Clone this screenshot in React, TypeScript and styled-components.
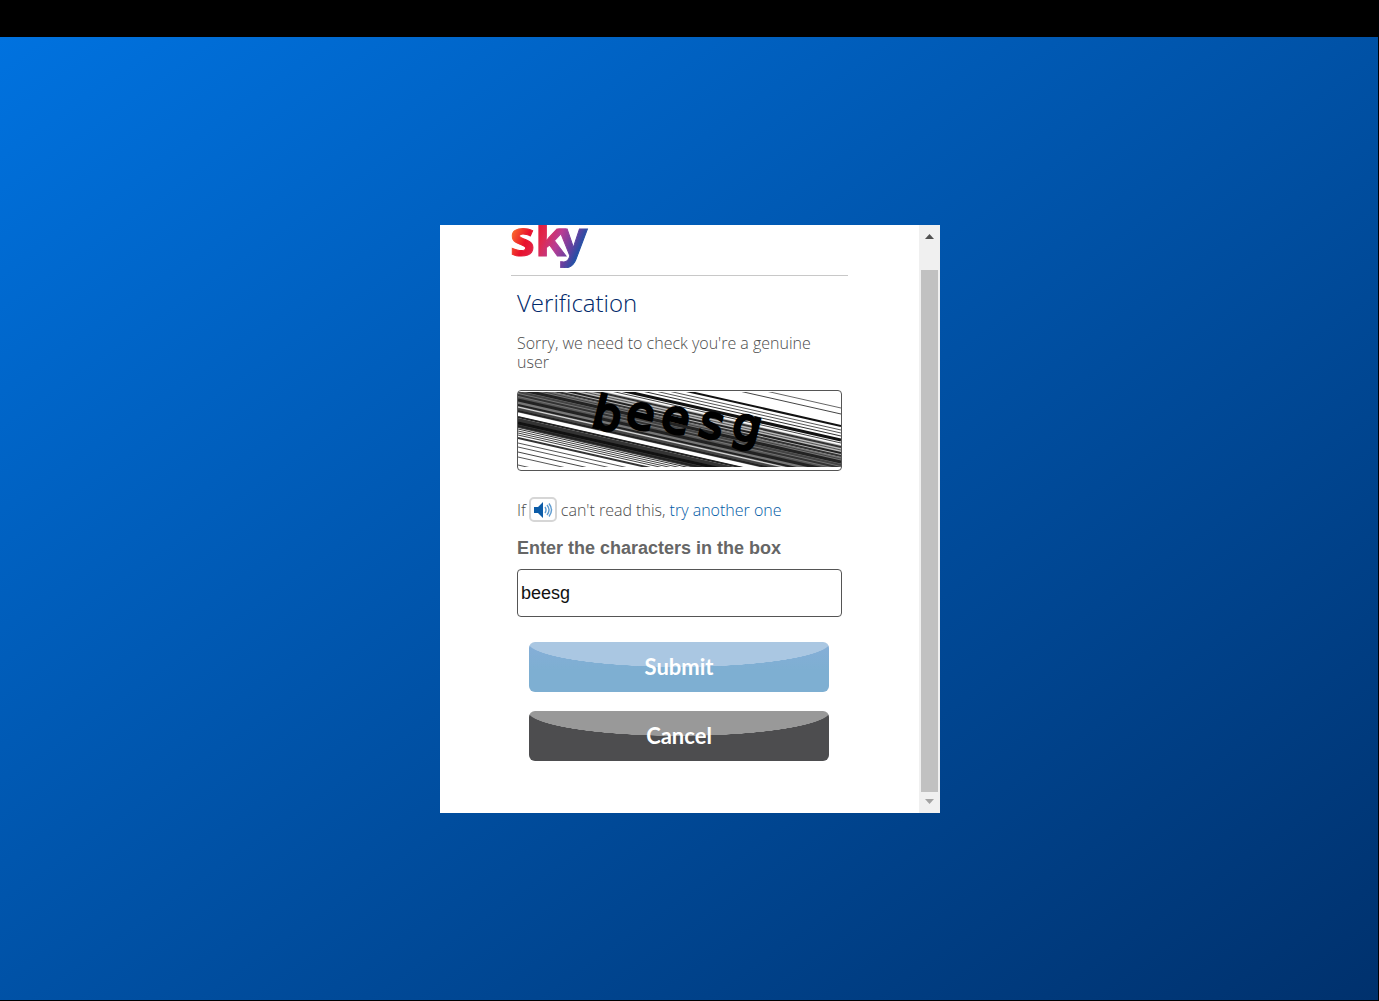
import React, { useState } from "react";
import styled, { createGlobalStyle } from "styled-components";

const GlobalStyle = createGlobalStyle`
  *, *::before, *::after { box-sizing: border-box; }
  body { margin: 0; background: #000; font-family: "Open Sans", "Noto Sans", sans-serif; }
`;

const Page = styled.div`
  display: flex;
  flex-direction: column;
  min-height: 100vh;
`;

const TopBar = styled.header`
  height: 37px;
  background: #000;
`;

const Stage = styled.main`
  flex: 1;
  display: flex;
  align-items: center;
  justify-content: center;
  padding: 1px 0 0 2px;
  border: solid #000;
  border-width: 0 1px 1px 0;
  background: linear-gradient(145deg, #0072df 0%, #00316d 100%);
`;

const Dialog = styled.section`
  display: flex;
  width: 500px;
  max-width: 100%;
  height: 588px;
  background: #fff;
`;

const Content = styled.div`
  flex: 1;
  padding: 0 71px;
  overflow: hidden;
`;

const LogoBar = styled.div`
  height: 51px;
  border-bottom: 1px solid #c8c8c8;
`;

const Form = styled.form`
  display: flex;
  flex-direction: column;
  padding: 10px 6px 0;
  font-size: 16px;
  color: #4c4c4c;
`;

const Title = styled.h1`
  margin: 0;
  font-size: 24px;
  line-height: 34px;
  font-weight: 300;
  color: #00286a;
`;

const Note = styled.p`
  margin: 14px 0 18px;
  line-height: 19px;
  font-size: 16px;
  font-weight: 300;
`;

const CaptchaFrame = styled.div`
  height: 81px;
  padding-top: 1px;
  overflow: hidden;
  border: 1px solid #555;
  border-radius: 4px;

  svg { display: block; }
`;

const Retry = styled.div`
  display: flex;
  align-items: center;
  margin-top: 26px;
  height: 25px;
  line-height: 24px;
  font-weight: 300;
  white-space: pre;

  a { color: #005ba6; text-decoration: none; }
`;

const AudioButton = styled.button`
  display: grid;
  place-items: center;
  width: 28px;
  height: 25px;
  margin: 0 4px 0 3px;
  padding: 0;
  border: 2px solid #d6d6d6;
  border-radius: 5px;
  background: #fff;
`;

const Label = styled.label`
  margin: 14px 0 9px;
  color: #666;
  font: bold 18px/24px "Liberation Sans", Arial, sans-serif;
`;

const TextBox = styled.input`
  width: 100%;
  height: 48px;
  padding: 0 3px;
  border: 1px solid #555;
  border-radius: 4px;
  background: #fff;
  color: #111;
  font: 18px "Liberation Sans", Arial, sans-serif;
`;

const Actions = styled.div`
  display: flex;
  flex-direction: column;
  gap: 19px;
  padding: 25px 13px 0 12px;
`;

const GlossButton = styled.button<{ $base: string; $gloss: string }>`
  height: 50px;
  padding: 0 0 2px;
  border: 0;
  border-radius: 6px;
  background:
    radial-gradient(ellipse 152px 25px at 50% 0, ${(p) => p.$gloss} 99%, transparent 100%),
    ${(p) => p.$base};
  color: #fff;
  font: bold 22px Lato, "Open Sans", sans-serif;
`;

const ScrollTrack = styled.div`
  display: flex;
  flex-direction: column;
  width: 21px;
  padding: 0 2px;
  background: #f0f0f0;
`;

const ScrollArrow = styled.div<{ $down?: boolean }>`
  display: flex;
  justify-content: center;
  height: ${(p) => (p.$down ? 21 : 45)}px;
  padding-top: ${(p) => (p.$down ? 7 : 9)}px;
`;

const ScrollThumb = styled.div`
  flex: 1;
  background: #c1c1c1;
`;

/* Each streak: height at the left edge, thickness, shade. */
const streaks: [number, number, string][] = [
  [-57, 1, "#666"], [-51, 1, "#444"], [-39, 2, "#111"], [-35, 1, "#555"],
  [-32, 1, "#555"], [-29, 1, "#333"], [-25, 3, "#111"], [-22, 1, "#444"],
  [-18, 2, "#333"], [-15, 1, "#555"], [-12, 2, "#222"], [-9, 2, "#333"],
  [-6, 1, "#444"], [-3, 3, "#222"], [0, 2, "#444"], [3, 2, "#333"],
  [6, 2, "#555"], [8, 3, "#222"], [13, 2, "#222"], [17, 2, "#444"],
  [19, 2, "#222"], [25, 2, "#222"], [28, 3, "#333"], [31, 3, "#111"],
  [34, 2, "#222"], [37, 1, "#333"], [39, 1, "#444"], [41, 1, "#444"],
  [43, 1, "#444"], [46, 2, "#333"], [51, 1, "#555"], [55, 1, "#555"],
  [60, 1, "#444"], [65, 1, "#555"], [73, 1, "#555"],
];

function CaptchaPicture() {
  return (
    <svg width="100%" height="75" viewBox="0 0 323 75" preserveAspectRatio="none" role="img" aria-label="Characters to type">
      <polygon points="0,-8 323,65 323,94 0,21" fill="#777" />
      <polygon points="0,-20 323,53 323,65 0,-8" fill="#bbb" />
      <polygon points="0,26 323,99 323,109 0,36" fill="#444" />
      {streaks.map(([y, w, c]) => (
        <line key={y} x1="0" y1={y} x2="323" y2={y + 73} stroke={c} strokeWidth={w} />
      ))}
      <line x1="0" y1="22" x2="323" y2="95" stroke="#fff" strokeWidth="3" />
      <line x1="0" y1="15" x2="323" y2="88" stroke="#ddd" strokeWidth="1" />
      <text
        x="72 106 141 179 212"
        y="34 33 37 43 45"
        rotate="14"
        fill="#000"
        stroke="#000"
        strokeWidth="3"
        fontFamily="DejaVu Sans"
        fontSize="45"
      >
        beesg
      </text>
    </svg>
  );
}

function SkyLogo() {
  return (
    <svg width="80" height="43" viewBox="0 0 80 43" role="img" aria-label="sky">
      <defs>
        <linearGradient id="sky" gradientUnits="userSpaceOnUse" x1="2" y1="4" x2="70" y2="34">
          <stop offset="0" stopColor="#fb6a2c" />
          <stop offset="0.22" stopColor="#e8102c" />
          <stop offset="0.42" stopColor="#e02a50" />
          <stop offset="0.62" stopColor="#b83c94" />
          <stop offset="0.8" stopColor="#6a3f9f" />
          <stop offset="1" stopColor="#0058a8" />
        </linearGradient>
      </defs>
      <text x="-1 24 48" y="31" fill="url(#sky)" stroke="url(#sky)" strokeWidth="1" fontFamily="Open Sans" fontWeight="700" fontSize="50">sky</text>
    </svg>
  );
}

export default function App() {
  const [value, setValue] = useState("beesg");
  return (
    <Page>
      <GlobalStyle />
      <TopBar />
      <Stage>
        <Dialog aria-label="Verification">
          <Content>
            <LogoBar><SkyLogo /></LogoBar>
            <Form onSubmit={(e) => e.preventDefault()}>
              <Title>Verification</Title>
              <Note>Sorry, we need to check you're a genuine user</Note>
              <CaptchaFrame><CaptchaPicture /></CaptchaFrame>
              <Retry>
                If
                <AudioButton type="button" aria-label="Listen to the characters">
                  <svg width="20" height="18" viewBox="0 0 20 18" fill="none">
                    <path d="M1 6h4l5-5v16l-5-5H1z" fill="#0c5ca8" />
                    <path d="M12 6q2 3 0 6M14 4q4 5 0 10M16 2.500q5 6.500 0 13" stroke="#5e9bd0" strokeWidth="1.400" />
                  </svg>
                </AudioButton>
                can't read this, <a href="#another">try another one</a>
              </Retry>
              <Label htmlFor="characters">Enter the characters in the box</Label>
              <TextBox id="characters" value={value} onChange={(e) => setValue(e.target.value)} />
              <Actions>
                <GlossButton type="submit" $base="linear-gradient(#86aed8, #7eafd2 55%)" $gloss="#aac7e2">Submit</GlossButton>
                <GlossButton type="button" $base="#4d4d4f" $gloss="#999">Cancel</GlossButton>
              </Actions>
            </Form>
          </Content>
          <ScrollTrack aria-hidden="true">
            <ScrollArrow>
              <svg width="9" height="5" viewBox="0 0 9 5"><path d="M0 5 4.500 0 9 5z" fill="#505050" /></svg>
            </ScrollArrow>
            <ScrollThumb />
            <ScrollArrow $down>
              <svg width="9" height="5" viewBox="0 0 9 5"><path d="M0 0 4.500 5 9 0z" fill="#a3a3a3" /></svg>
            </ScrollArrow>
          </ScrollTrack>
        </Dialog>
      </Stage>
    </Page>
  );
}
